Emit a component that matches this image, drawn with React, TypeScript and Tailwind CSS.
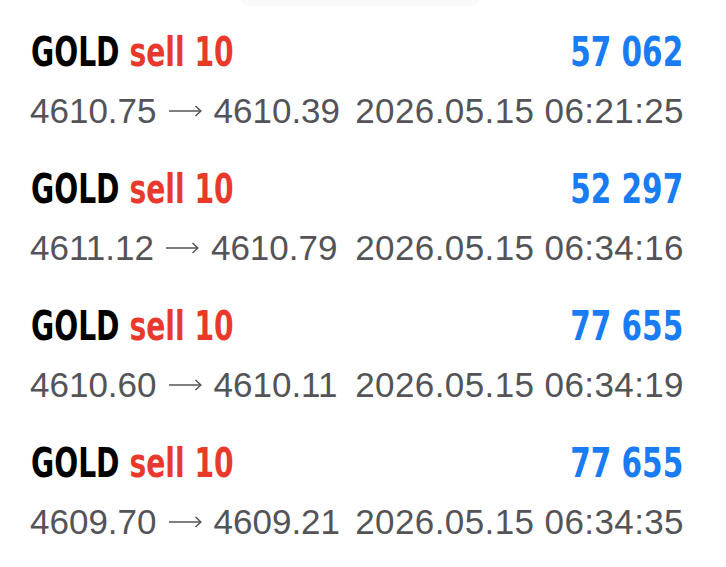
const trades = [
  { sym: "GOLD", side: "sell 10", profit: "57 062", open: "4610.75", close: "4610.39", time: "2026.05.15 06:21:25" },
  { sym: "GOLD", side: "sell 10", profit: "52 297", open: "4611.12", close: "4610.79", time: "2026.05.15 06:34:16" },
  { sym: "GOLD", side: "sell 10", profit: "77 655", open: "4610.60", close: "4610.11", time: "2026.05.15 06:34:19" },
  { sym: "GOLD", side: "sell 10", profit: "77 655", open: "4609.70", close: "4609.21", time: "2026.05.15 06:34:35" },
];

function Arrow() {
  return (
    <svg width="33" height="12" viewBox="0 0 33 12" className="mx-[12px] -mt-[1px] inline-block" fill="none" stroke="currentColor" strokeWidth="1.5">
      <path d="M0 6H31.5" />
      <path d="M26.5 1L31.8 6L26.5 11" />
    </svg>
  );
}

function TradeRow({ t }: { t: (typeof trades)[number] }) {
  return (
    <div className="flex h-[137px] flex-col">
      <div className="flex h-[44px] items-center justify-between pl-[31px] pr-[43px] font-['DejaVu_Sans_Condensed',sans-serif] text-[41px] font-bold">
        <div className="origin-left scale-x-[0.765] whitespace-nowrap">
          <span className="text-black">{t.sym}</span>{" "}
          <span className="text-[#e8392c]">{t.side}</span>
        </div>
        <div className="origin-right scale-x-[0.8] text-[#1a7cf5]">{t.profit}</div>
      </div>
      <div className="mt-[16px] flex h-[40px] items-center justify-between pl-[30px] pr-[42px] font-['Liberation_Sans',sans-serif] text-[35px] text-[#545458]">
        <div className="flex items-center whitespace-nowrap">
          <span>{t.open}</span>
          <Arrow />
          <span>{t.close}</span>
        </div>
        <div className="whitespace-nowrap tracking-[0.4px]">{t.time}</div>
      </div>
    </div>
  );
}

export default function App() {
  return (
    <div className="relative min-h-[567px] w-[726px] overflow-hidden bg-white pt-[31px]">
      <div className="absolute left-[240px] top-[-12px] h-[18px] w-[240px] rounded-full bg-[#fafafa]" />
      {trades.map((t, i) => (
        <TradeRow key={i} t={t} />
      ))}
    </div>
  );
}
